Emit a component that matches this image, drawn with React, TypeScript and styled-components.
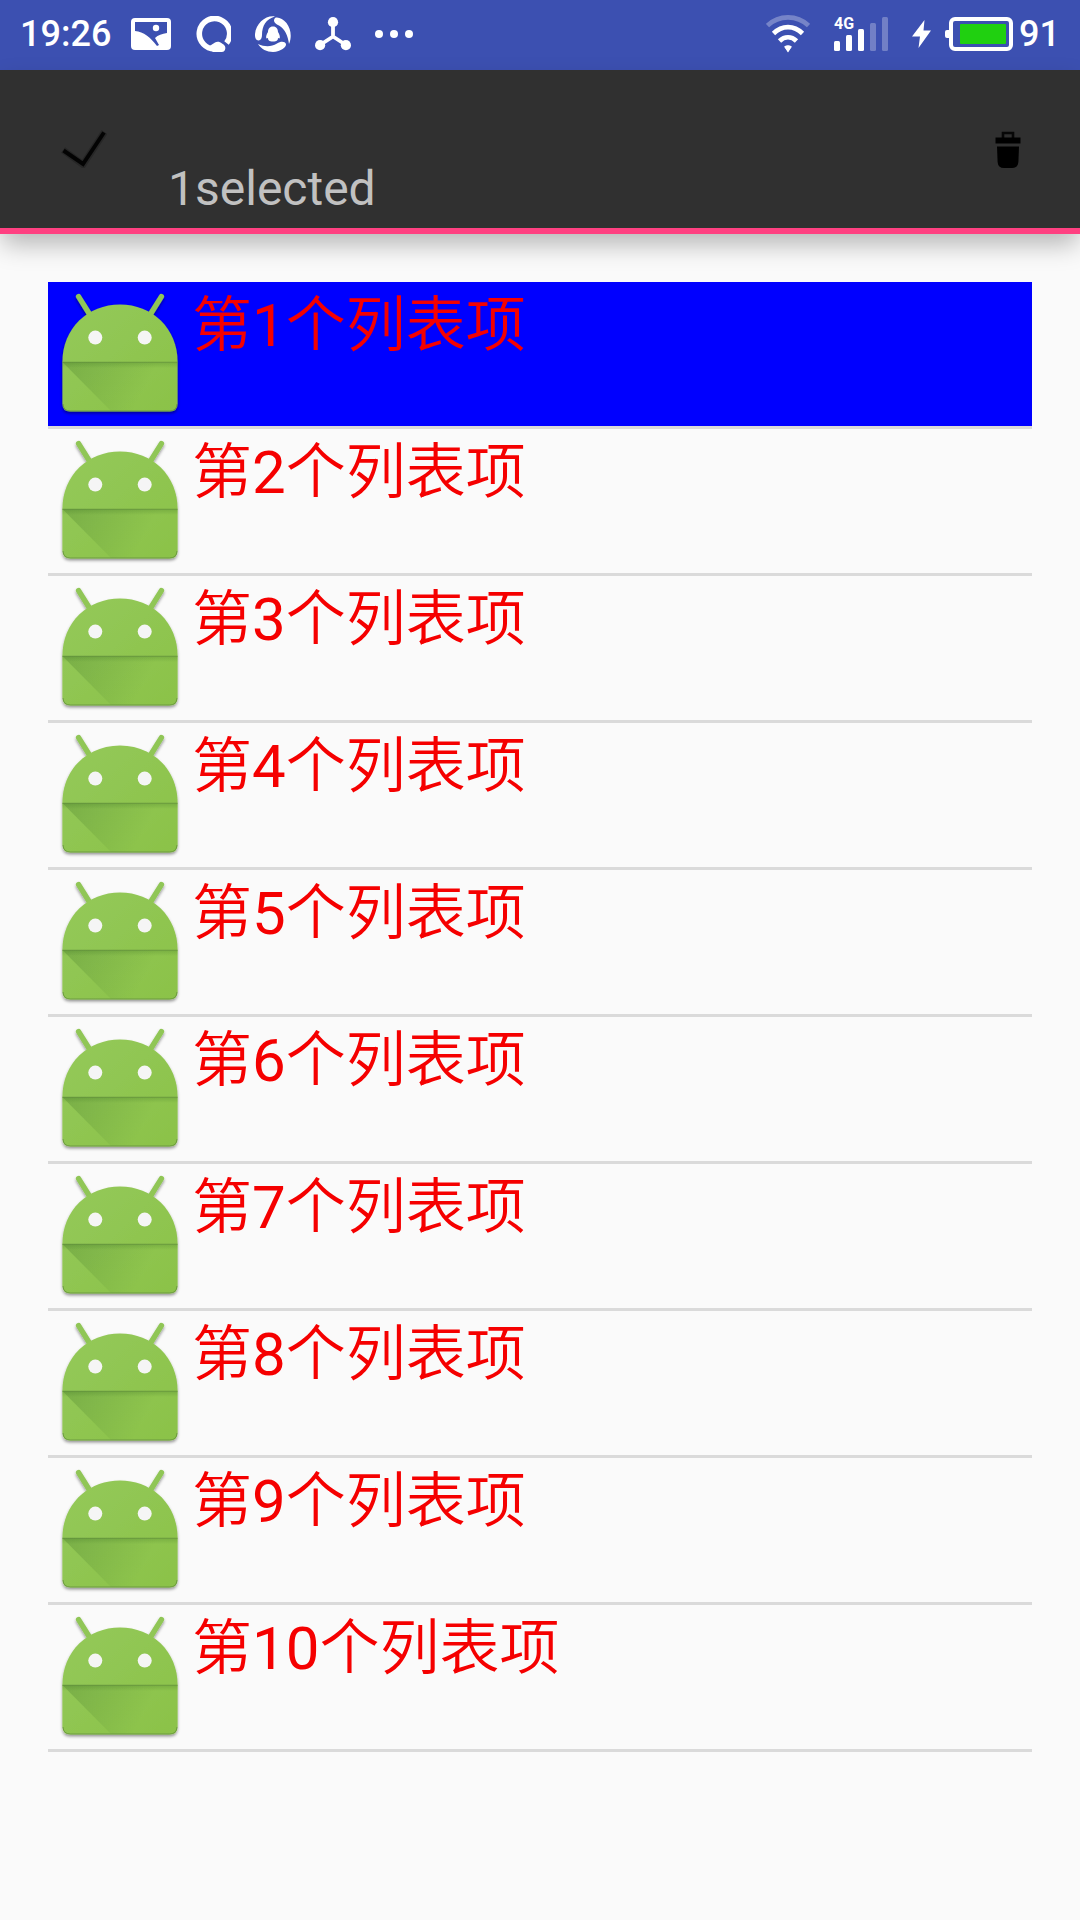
import React, { useState } from "react";
import styled, { createGlobalStyle } from "styled-components";

const GlobalStyle = createGlobalStyle`
  * { box-sizing: border-box; }
  html, body { margin: 0; background: #fafafa; }
  body { font-family: Roboto, "Noto Sans CJK SC", sans-serif; }
`;

const StatusBar = styled.header`
  display: flex;
  align-items: center;
  justify-content: space-between;
  height: 70px;
  padding: 0 20px 2px;
  background: #3c50b1;
  color: #fff;
`;

const StatusGroup = styled.div<{ $gap: number }>`
  display: flex;
  align-items: center;
  gap: ${(p) => p.$gap}px;
`;

const StatusText = styled.span`
  font-size: 36px;
  line-height: 40px;
  font-weight: 500;
`;

const StatusIcon = styled.svg`
  display: block;
  flex: none;
`;

const NetworkLabel = styled.text`
  font-size: 16px;
  font-weight: 700;
`;

const ActionBar = styled.div`
  position: relative;
  display: flex;
  align-items: stretch;
  height: 164px;
  background: #303030;
  border-bottom: 6px solid #ff4081;
  box-shadow: 0 12px 24px -2px rgba(0, 0, 0, 0.28);
`;

const ActionButton = styled.button<{ $width: number }>`
  display: flex;
  align-items: center;
  justify-content: center;
  width: ${(p) => p.$width}px;
  padding: 0;
  border: 0;
  background: transparent;
  cursor: pointer;
`;

const Title = styled.h1`
  flex: 1;
  align-self: flex-end;
  margin: 0;
  padding-bottom: 11px;
  font-size: 48px;
  line-height: 56px;
  font-weight: 400;
  color: #c1c1c1;
`;

const List = styled.ul`
  list-style: none;
  margin: 0;
  padding: 48px;
`;

const Row = styled.li`
  border-bottom: 3px solid #dadada;
`;

const RowButton = styled.button<{ $selected: boolean }>`
  display: flex;
  align-items: flex-start;
  width: 100%;
  padding: 0;
  border: 0;
  background: ${(p) => (p.$selected ? "#0000ff" : "transparent")};
  color: #f50000;
  font-family: Roboto, "Noto Sans CJK SC DemiLight", "Noto Sans CJK SC", sans-serif;
  font-size: 60px;
  line-height: 72px;
  text-align: left;
  cursor: pointer;
`;

const RowLabel = styled.span`
  padding-top: 8px;
`;

function PictureIcon() {
  return (
    <StatusIcon width="40" height="32" viewBox="0 0 40 32">
      <rect width="40" height="32" rx="4" fill="#fff" />
      <path d="M4 4H36V15C31 16 27 17 24 20L28 27L26 28C19 19 13 14 4 13Z" fill="#3c50b1" />
      <circle cx="25" cy="10" r="3.2" fill="#fff" />
    </StatusIcon>
  );
}

function RingIcon() {
  return (
    <StatusIcon width="36" height="36" viewBox="0 0 36 36">
      <path d="M21 32.8A15.2 15.2 0 1 1 31.5 27" fill="none" stroke="#fff" strokeWidth="5.6" />
      <path d="M13 31C16 29 18 28 20 26.5C22 25 25 25.5 27 27.5C30 29 31 31 30 34Q29 36 27 36H18Z" fill="#fff" />
    </StatusIcon>
  );
}

function PenguinIcon() {
  return (
    <StatusIcon width="36" height="36" viewBox="0 0 36 36" fill="#fff">
      <path d="M20 0.5C11 -1 1 7 0 18C-0.3 22 1 24.6 3.5 24.4C6 24.2 7 22 7 19C7 10 11 3 20 0.5Z" />
      <path d="M20 2C23 0.5 28 3 31.5 7C36 13 37 21 34 28C33 20 30 13 24 9.5C20 7.5 17.5 5 20 2Z" />
      <path d="M3 28C10 31 16 31 22 27.5C26 25 30 25.5 31 28C31.5 31 26 35.5 18 36C12 36 6 33 3 28Z" />
      <path d="M18 10.5C14.5 10.5 13 13 13 16C11.5 18.5 10.5 21 11.5 22.5L13 22C13 24 14 25.6 18 25.6S23 24 23 22L24.5 22.5C25.5 21 24.5 18.5 23 16C23 13 21.5 10.5 18 10.5Z" />
    </StatusIcon>
  );
}

function NodesIcon() {
  return (
    <StatusIcon width="36" height="34" viewBox="0 0 36 34" fill="#fff">
      <path d="M18 5V19.5L5 28M18 19.5L31 28" fill="none" stroke="#fff" strokeWidth="3.8" />
      <circle cx="18" cy="5.2" r="5.1" />
      <circle cx="5.1" cy="28.2" r="5.1" />
      <circle cx="30.9" cy="28.2" r="5.1" />
    </StatusIcon>
  );
}

function MoreIcon() {
  return (
    <StatusIcon width="38" height="8" viewBox="0 0 38 8" fill="#fff">
      <circle cx="4" cy="4" r="4" />
      <circle cx="19" cy="4" r="4" />
      <circle cx="34" cy="4" r="4" />
    </StatusIcon>
  );
}

function WifiIcon() {
  return (
    <StatusIcon width="44" height="38" viewBox="0 0 44 38" fill="none" stroke="#fff" strokeWidth="4.6">
      <path d="M1.5 10.5C13 -0.4 31 -0.4 42.5 10.5" opacity="0.3" />
      <path d="M7.5 18.5C16 10 28 10 36.5 18.5" />
      <path d="M13.5 26C18.5 21 25.5 21 30.5 26" />
      <path d="M18.2 31.6Q22 28.8 25.8 31.6L22 37.4Z" fill="#fff" stroke="none" />
      <path d="M19.6 32.2Q22 30.8 24.4 32.2L22 35.6Z" fill="#fff" strokeWidth="1.6" />
    </StatusIcon>
  );
}

function SignalIcon() {
  return (
    <StatusIcon width="54" height="46" viewBox="0 -6 54 46" fill="#fff">
      <NetworkLabel x="0" y="12">4G</NetworkLabel>
      <rect x="0" y="24" width="6" height="10" rx="1.5" />
      <rect x="12" y="18" width="6" height="16" rx="1.5" />
      <rect x="24" y="12" width="6" height="22" rx="1.5" />
      <rect x="36" y="6" width="6" height="28" rx="1.5" opacity="0.28" />
      <rect x="48" y="0" width="6" height="34" rx="1.5" opacity="0.28" />
    </StatusIcon>
  );
}

function BoltIcon() {
  return (
    <StatusIcon width="19" height="28" viewBox="0 0 19 28" fill="#fff">
      <path d="M12.5 0L0 16.5H8L6.5 28L19 10.5H11.5Z" />
    </StatusIcon>
  );
}

function BatteryIcon() {
  return (
    <StatusIcon width="68" height="34" viewBox="0 0 68 34">
      <rect x="6" y="2" width="60" height="30" rx="4" fill="none" stroke="#fff" strokeWidth="4" />
      <path d="M4 13H2Q0 13 0 15V19Q0 21 2 21H4Z" fill="#fff" />
      <rect x="15" y="7" width="46" height="20" rx="1" fill="#20d010" />
    </StatusIcon>
  );
}

function CheckIcon() {
  return (
    <svg width="46" height="38" viewBox="0 0 46 38">
      <path d="M2 20L22 34.5L43.5 2" fill="none" stroke="#000" strokeWidth="7" opacity="0.2" />
      <path d="M2.5 20.5L22 34L43 2.5" fill="none" stroke="#000" strokeWidth="4" opacity="0.9" />
    </svg>
  );
}

function TrashIcon() {
  return (
    <svg width="26" height="40" viewBox="0 -2 26 40">
      <path d="M8 7V2H18V7" fill="none" stroke="#000" strokeWidth="2.6" opacity="0.85" />
      <path d="M0.5 6.5H25.5V12.5H0.5Z" />
      <path d="M2 15.5H24L23.4 31Q23 37 17 37H9Q3 37 2.6 31Z" />
    </svg>
  );
}

function RobotDefs() {
  return (
    <svg width="0" height="0" style={{ display: "block" }} aria-hidden="true">
      <defs>
        <linearGradient id="skin" x1="0" y1="0" x2="1" y2="1">
          <stop offset="0" stopColor="#94c95a" />
          <stop offset="1" stopColor="#8bc248" />
        </linearGradient>
        <linearGradient id="fold" gradientUnits="userSpaceOnUse" x1="22" y1="80" x2="92" y2="116">
          <stop offset="0" stopColor="#33691e" stopOpacity="0.24" />
          <stop offset="1" stopColor="#33691e" stopOpacity="0" />
        </linearGradient>
        <linearGradient id="lip" x1="0" y1="0" x2="0" y2="1">
          <stop offset="0" stopColor="#33691e" stopOpacity="0.24" />
          <stop offset="1" stopColor="#33691e" stopOpacity="0" />
        </linearGradient>
        <filter id="drop" x="-10%" y="-10%" width="120%" height="120%">
          <feDropShadow dx="0" dy="2" stdDeviation="1.5" floodColor="#000" floodOpacity="0.4" />
        </filter>
      </defs>
    </svg>
  );
}

function RobotIcon() {
  return (
    <StatusIcon width="144" height="144" viewBox="0 0 144 144" aria-hidden="true">
      <g filter="url(#drop)">
        <path d="M30.6 14.6L43 34.5M113.4 14.6L101 34.5" stroke="#90c656" strokeWidth="5.4" strokeLinecap="round" />
        <path
          d="M14.4 80C14.4 46 40 22.4 72 22.4S129.6 46 129.6 80V121.5Q129.6 129.5 121.6 129.5H22.4Q14.4 129.5 14.4 121.5Z"
          fill="url(#skin)"
        />
      </g>
      <path d="M14.4 80H129V129H63Z" fill="url(#fold)" />
      <rect x="14.4" y="80" width="115.2" height="6" fill="url(#lip)" />
      <path d="M14.4 80.2H129.6" stroke="#5f8a3c" strokeWidth="1" opacity="0.6" />
      <path d="M15 122Q15.4 129 22.4 129H121.6Q128.6 129 129 122" fill="none" stroke="#5f8a3c" strokeWidth="1" opacity="0.7" />
      <circle cx="47.3" cy="55.6" r="7" fill="#f5f5f5" />
      <circle cx="96.7" cy="55.6" r="7" fill="#f5f5f5" />
    </StatusIcon>
  );
}

const items = Array.from({ length: 10 }, (_, i) => `第${i + 1}个列表项`);

export default function App() {
  const [selected, setSelected] = useState<number[]>([0]);
  const toggle = (i: number) =>
    setSelected((s) => (s.includes(i) ? s.filter((n) => n !== i) : [...s, i]));

  return (
    <>
      <GlobalStyle />
      <RobotDefs />
      <StatusBar>
        <StatusGroup $gap={20}>
          <StatusText>19:26</StatusText>
          <StatusGroup $gap={24}>
            <PictureIcon />
            <RingIcon />
            <PenguinIcon />
            <NodesIcon />
            <MoreIcon />
          </StatusGroup>
        </StatusGroup>
        <StatusGroup $gap={14}>
          <StatusGroup $gap={24}>
            <WifiIcon />
            <SignalIcon />
            <BoltIcon />
          </StatusGroup>
          <StatusGroup $gap={6}>
            <BatteryIcon />
            <StatusText>91</StatusText>
          </StatusGroup>
        </StatusGroup>
      </StatusBar>
      <ActionBar>
        <ActionButton $width={168} aria-label="Done" onClick={() => setSelected([])}>
          <CheckIcon />
        </ActionButton>
        <Title>{selected.length}selected</Title>
        <ActionButton $width={144} aria-label="Delete">
          <TrashIcon />
        </ActionButton>
      </ActionBar>
      <main>
        <List>
          {items.map((label, i) => (
            <Row key={label}>
              <RowButton
                $selected={selected.includes(i)}
                aria-pressed={selected.includes(i)}
                onClick={() => toggle(i)}
              >
                <RobotIcon />
                <RowLabel>{label}</RowLabel>
              </RowButton>
            </Row>
          ))}
        </List>
      </main>
    </>
  );
}
